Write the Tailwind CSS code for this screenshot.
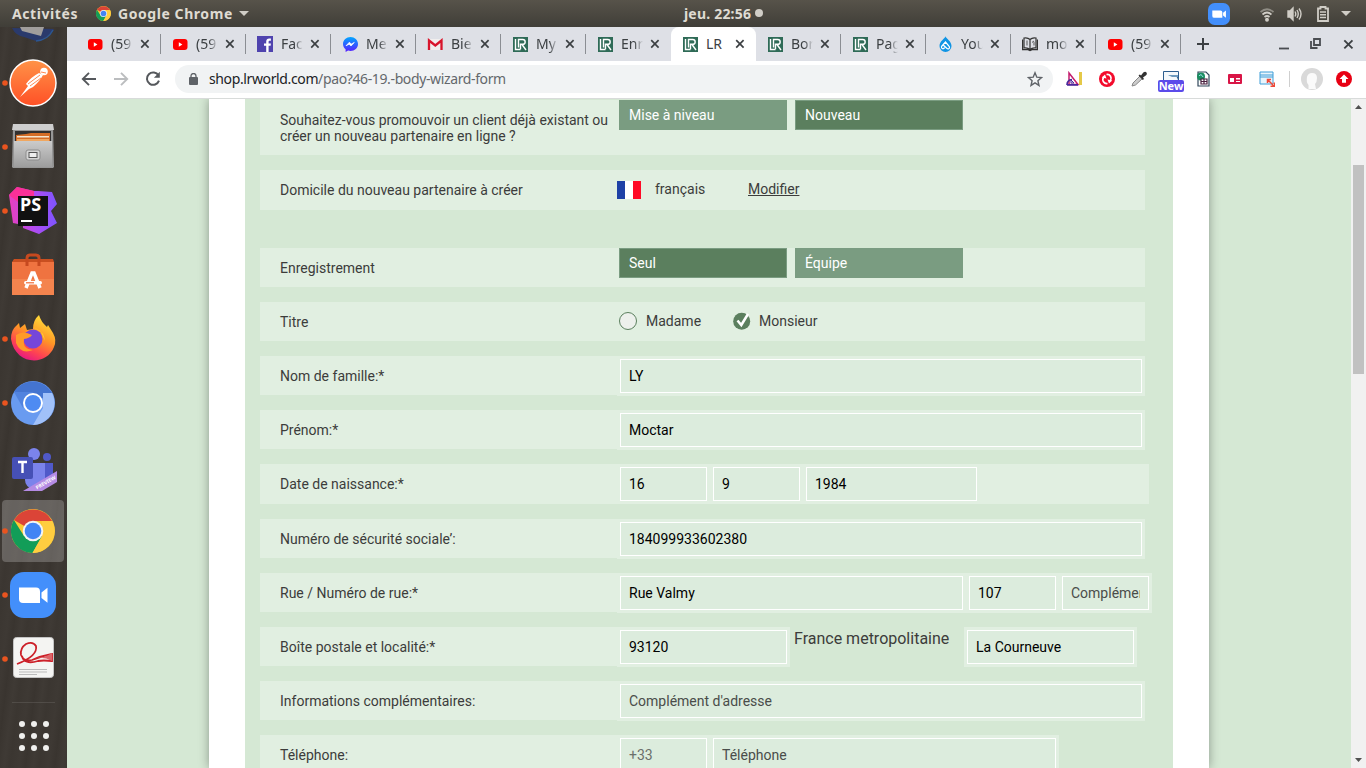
<!DOCTYPE html>
<html lang="fr">
<head>
<meta charset="utf-8">
<title>LR</title>
<script src="https://cdn.jsdelivr.net/npm/@tailwindcss/browser@4"></script>
</head>
<body class="w-[1366px] h-[768px] overflow-hidden flex flex-col font-['Noto_Sans',sans-serif] text-[#3c4043]">
<svg width="0" height="0" class="absolute">
  <defs>
    <symbol id="yt" viewBox="0 0 16 16"><rect x="1" y="3" width="14.500" height="11" rx="3" fill="#f00"/><path d="M6.800 6.300v4.400L10.400 8.500z" fill="#fff"/></symbol>
    <symbol id="fb" viewBox="0 0 16 16"><rect width="16" height="16" fill="#4f43ae"/><path d="M9.200 16V9.800H7V7.400h2.200V5.600c0-2 1.200-3.100 3-3.100.8 0 1.500.1 1.700.1v2.100h-1.200c-.9 0-1.100.5-1.100 1.200v1.500h2.300l-.3 2.400h-2V16z" fill="#fff"/></symbol>
    <symbol id="ms" viewBox="0 0 16 16"><defs><linearGradient id="msg" x1="0" y1="0" x2="0" y2="1"><stop stop-color="#00a6ff"/><stop offset="1" stop-color="#5a1cff"/></linearGradient></defs><path d="M8.500 1C4.400 1 1 4 1 8c0 2.200 1 4 2.600 5.300V16l2.500-1.400c.7.2 1.600.3 2.400.3 4.200 0 7.500-3 7.500-7S12.700 1 8.500 1z" fill="url(#msg)"/><path d="M4 9.800l3.400-3.600 1.900 1.900 3-1.700-3.300 3.600-1.900-1.800z" fill="#fff" stroke="#fff" stroke-width=".7"/></symbol>
    <symbol id="gm" viewBox="0 0 16 16"><path d="M1 3h14v11H1z" fill="#f1efee"/><path d="M2 14V4.500l6.300 5L14.500 4.500V14" fill="none" stroke="#d8152c" stroke-width="2.300"/></symbol>
    <symbol id="lr" viewBox="0 0 16 16"><rect x="1" y="1" width="15" height="15" fill="#2f6b57"/><path d="M3.500 3v10.500h5M6.500 11.500V3.500h4.200c3.300 0 3.300 4.800 0 4.800H8.500v5M10 8.500l4 5.500" fill="none" stroke="#fff" stroke-width="1.400"/></symbol>
    <symbol id="dr" viewBox="0 0 16 16"><path d="M8.500.3C8 2.800 2.500 5 2.500 10a6 6 0 0 0 12 0C14.500 5 9 2.800 8.500.3z" fill="#1094e4"/><path d="M4.500 10.500L8.500 6l3.800 4.500c1 2-1.300 3.300-2.600 1.700L6.500 9.300M7.500 11.500c-1 2.400-3.500 1-3-1" fill="none" stroke="#fff" stroke-width="1.200"/></symbol>
    <symbol id="bk" viewBox="0 0 16 16"><path d="M8 3.500C6 1.600 3.500 1.700 2 2v10c2-.4 4.300 0 6 1.500 1.700-1.500 4-1.900 6-1.500V2c-1.500-.3-4-.4-6 1.500zM8 3.500v10M.5 3.500v10.200H6l2 1 2-1h5.500V3.500" fill="none" stroke="#333" stroke-width="1.200"/><path d="M5 4.500v5M10 6.500q2-2.500 2 0v3" fill="none" stroke="#555"/></symbol>
    <symbol id="x" viewBox="0 0 10 10"><path d="M1.200 1.200l7.400 7.400M8.600 1.200L1.200 8.600" stroke="#3c4043" stroke-width="1.700" fill="none"/></symbol>
    <symbol id="chrome" viewBox="0 0 44 44"><circle cx="22" cy="22" r="22" fill="#fcc934"/><path d="M22 22L2.900 11A22 22 0 0 1 41.100 12H22z" fill="#db4437"/><path d="M2.900 11A22 22 0 0 0 21.500 44L31 27.500 22 22 13 27z" fill="#129d58"/><path d="M41.100 12A22 22 0 0 1 21.500 44L31 27V12z" fill="#ffcd40"/><circle cx="22" cy="22" r="10.300" fill="#f4f4f4"/><circle cx="22" cy="22" r="8.300" fill="#4285f4"/></symbol>
    <symbol id="cam" viewBox="0 0 46 46"><rect width="46" height="46" rx="14" fill="#438ffb"/><path d="M9 15.500h17a4 4 0 0 1 4 4v11.500H13a4 4 0 0 1-4-4zM31.500 20.500l6-4.700v15l-6-4.700z" fill="#fff"/></symbol>
  </defs>
</svg>

<!-- System bar -->
<header class="h-[27px] shrink-0 bg-linear-to-b from-[#57534a] to-[#403e38] flex items-center text-[#dfdbd2] font-bold text-[14px] relative">
  <span class="ml-[12px] w-[84px] whitespace-nowrap" data-fit="63">Activités</span>
  <svg class="w-[15px] h-[15px]"><use href="#chrome"/></svg>
  <span class="ml-[7px] whitespace-nowrap" data-fit="110">Google Chrome</span>
  <svg class="ml-[6px]" width="10" height="5"><path d="M0 0h10L5 5z" fill="#d0cdc6"/></svg>
  <div class="absolute left-[684px] top-0 h-[26px] flex items-center gap-[4px]"><span data-fit="66" class="whitespace-nowrap">jeu. 22:56</span><i class="size-2 rounded-full bg-[#d0cdc6]"></i></div>
  <div class="ml-auto flex items-center h-full">
    <svg class="w-[22px] h-[22px] mr-[29px]"><use href="#cam"/></svg>
    <svg class="mr-[12px]" width="16" height="16" viewBox="0 0 16 16" fill="none" stroke="#d0cdc6" stroke-width="1.700"><path d="M1.500 6Q8 .5 14.500 6" opacity=".5"/><path d="M3.500 8.500Q8 4.500 12.500 8.500M5.500 11Q8 9 10.500 11"/><circle cx="8" cy="13.700" r="1.100" fill="#d0cdc6"/></svg>
    <svg class="mr-[13px]" width="16" height="16" viewBox="0 0 16 16" fill="none" stroke="#d0cdc6" stroke-width="1.400"><path d="M1 5h2l3-3v12l-3-3H1z" fill="#d0cdc6"/><path d="M8 5.500Q9.500 8 8 10.500M10 4Q12.500 8 10 12M12 2.500Q16 8 12 13.500"/></svg>
    <svg class="mr-[11px]" width="14" height="16" viewBox="0 0 14 16" fill="none" stroke="#d0cdc6"><path d="M2 2.500h2.500V1h5v1.500H12V15H2z" stroke-width="1.800"/><path d="M4 6h6M4 8.800h6M4 11.600h6" stroke-width="1.500"/></svg>
    <svg class="mr-[15px]" width="10" height="5"><path d="M0 0h10L5 5z" fill="#d0cdc6"/></svg>
  </div>
</header>

<div class="flex flex-1 min-h-0">
  <!-- Dock -->
  <aside class="w-[67px] shrink-0 bg-[repeating-linear-gradient(97deg,#3a3530_0px,#3f3a35_7px,#3b3631_13px,#3e3934_22px,#39342f_29px)] flex flex-col overflow-hidden">
    <svg class="h-[24px] w-[67px] shrink-0" viewBox="0 0 67 24"><path d="M12 1q4 8 12 9l12 4 2-1q11-2 16-11z" fill="#2a3a6c"/><path d="M20 0l2 4 19 5 3-9z" fill="#a19e9c"/><path d="M36 14q12-1 17-11" stroke="#2c5692" fill="none" stroke-width="1.500"/></svg>
    <div id="dock" class="flex flex-col"></div>
    <div class="mx-3 mt-[11px] h-px bg-white/10"></div>
    <div class="mt-[18px] mx-auto grid grid-cols-3 gap-[6px]">
      <i class="size-[6px] rounded-full bg-[#f0f0ee]"></i><i class="size-[6px] rounded-full bg-[#f0f0ee]"></i><i class="size-[6px] rounded-full bg-[#f0f0ee]"></i>
      <i class="size-[6px] rounded-full bg-[#f0f0ee]"></i><i class="size-[6px] rounded-full bg-[#f0f0ee]"></i><i class="size-[6px] rounded-full bg-[#f0f0ee]"></i>
      <i class="size-[6px] rounded-full bg-[#f0f0ee]"></i><i class="size-[6px] rounded-full bg-[#f0f0ee]"></i><i class="size-[6px] rounded-full bg-[#f0f0ee]"></i>
    </div>
  </aside>

  <main class="flex-1 min-w-0 flex flex-col">
    <!-- Tabs -->
    <div class="h-[34px] shrink-0 bg-[#dee0e6] flex items-center pl-[9px]">
      <div id="tabs" class="flex h-full"></div>
      <svg class="ml-[16px]" width="12" height="12"><path d="M6 0v12M0 6h12" stroke="#3c4043" stroke-width="2"/></svg>
      <svg class="ml-auto mr-[21px]" width="10" height="12"><path d="M0 10.500h10" stroke="#4a4d51" stroke-width="1.800"/></svg>
      <svg class="mr-[22px]" width="11" height="12" fill="none" stroke="#4a4d51"><path d="M4 1h6v6H4zM1 3v7h6.500" stroke-width="1.800"/></svg>
      <svg class="mr-[12px] w-[11px] h-[11px]"><use href="#x"/></svg>
    </div>
    <!-- Toolbar -->
    <div class="h-[38px] shrink-0 bg-white border-b border-[#d8dbda] flex items-center pl-[14px] pb-px">
      <svg class="w-4 h-4" viewBox="0 0 16 16" fill="none" stroke="#55585c" stroke-width="1.900"><path d="M15 8H2M8 1.800L1.800 8 8 14.200"/></svg>
      <svg class="w-4 h-4 ml-[16px]" viewBox="0 0 16 16" fill="none" stroke="#bbbdbf" stroke-width="1.900"><path d="M1 8h13M8 1.800L14.200 8 8 14.200"/></svg>
      <svg class="w-4 h-4 ml-[16px]" viewBox="0 0 16 16" fill="none" stroke="#55585c" stroke-width="2"><path d="M13.500 4.500A6.200 6.200 0 1 0 14 9.700"/><path d="M14.800.8v6H8.900z" fill="#55585c" stroke="none"/></svg>
      <div class="ml-[14px] w-[878px] h-7 rounded-full bg-[#f1f3f4] flex items-center pl-[14px] pr-[10px]">
        <svg width="9" height="12" viewBox="0 0 9 12"><rect y="4" width="9" height="8" rx="1" fill="#5f6368"/><path d="M2 5V3a2.500 2.500 0 0 1 5 0v2" fill="none" stroke="#5f6368" stroke-width="1.300"/></svg>
        <span class="ml-[11px] pb-[2px] text-[14px] whitespace-nowrap text-[#64686c]" data-fit="295"><span class="text-[#202124]">shop.lrworld.com</span>/pao?46-19.-body-wizard-form</span>
        <svg class="ml-auto" width="16" height="16" viewBox="0 0 16 16"><path d="M8 1.800l1.800 4.400 4.700.4-3.600 3.100 1.100 4.700-4-2.500-4 2.500 1.100-4.700L1.500 6.600l4.700-.4z" fill="none" stroke="#5f6368" stroke-width="1.400"/></svg>
      </div>
      <div class="flex items-center ml-[13px]">
        <svg width="17" height="16" viewBox="0 0 17 16"><path d="M3 2l9 11.500H3z" fill="#fff" stroke="#c41d6d" stroke-width="1.500"/><path d="M5 9l3 3H5z" fill="none" stroke="#4a2a9c"/><path d="M1 14q0-5 5-5.500M1 13.800h11" stroke="#4a2a9c" stroke-width="1.700" fill="none"/><path d="M14.500 1v13" stroke="#e5c948" stroke-width="3"/></svg>
        <svg class="ml-[16px]" width="16" height="16" viewBox="0 0 16 16"><circle cx="8" cy="8" r="8" fill="#f30b2c"/><path d="M8.500 12.500C5 13 2.500 9.500 4.700 6M7.500 3.500C11 3 13.500 6.500 11.300 10" stroke="#fff" stroke-width="1.700" fill="none"/><path d="M2.700 6.600L6 3.600l1.500 4zM13.300 9.400L10 12.400l-1.500-4z" fill="#fff"/></svg>
        <svg class="ml-[16px]" width="16" height="16" viewBox="0 0 16 16"><path d="M1 15l1-3L9 5l2.500 2.500L4.500 14z" fill="#ccc" stroke="#888"/><path d="M7.500 4.500l1.300-1L10 4.600 12.300 1.500q2-1.500 3.200 0 .9 1.800-.4 2.700L12 6.500 13 8l-1.300 1z" fill="#333"/></svg>
        <div class="relative ml-[11px] w-[26px] h-[28px]">
          <svg class="absolute left-[5px] top-[6px]" width="16" height="12"><path d="M0 0h16v12H0z" fill="#f4f8fb"/><path d="M.5 9V.5h15V9" fill="none" stroke="#2d5d8e"/><path d="M6 5q7-3 9 4V4z" fill="#2d5d8e"/><path d="M5 4h10v2H9z" fill="#6d99bd"/></svg>
          <span class="absolute left-0 top-[15px] w-[26px] h-[12px] rounded-[2px] bg-[#5b4bea] text-white text-[11px] leading-[12px] font-bold text-center">New</span>
        </div>
        <svg class="ml-[12px]" width="14" height="16" viewBox="0 0 14 16"><path d="M2 1h8l3 3v11H2z" fill="#fff" stroke="#30475a" stroke-width="1.200"/><circle cx="5" cy="5.500" r="4" fill="#1b8d60"/><path d="M3 5q2-3 4 1" stroke="#98ddea" fill="none"/><path d="M5 8h6v5H5zM8 8v5M5 10.500h6" fill="#fff" stroke="#49203f" stroke-width="1.200"/></svg>
        <svg class="ml-[18px]" width="14" height="12" viewBox="0 0 14 12"><rect y="1" width="14" height="10" rx="1" fill="#d91546"/><path d="M2 5h4v4H2zM8 5h4v1.500H8zM8 8h4v1H8z" fill="#fff"/></svg>
        <svg class="ml-[17px]" width="16" height="16" viewBox="0 0 16 16"><path d="M1 1h13v12H1z" fill="#e9f5fc" stroke="#3f9ed8"/><path d="M1 4h13M1 6h13" stroke="#3f9ed8" stroke-width="1.200"/><path d="M9 9l6 6M8.500 12V8.500H12M15.300 11.500v3.800h-3.800" stroke="#ee4938" fill="none" stroke-width="1.500"/></svg>
        <i class="ml-[14px] w-px h-4 bg-[#cfcfcf]"></i>
        <svg class="ml-[11px]" width="22" height="22" viewBox="0 0 22 22"><circle cx="11" cy="11" r="11" fill="#d9d9d9"/><path d="M7.500 21v-4Q5 14 6 9q1-4 5-4 5 0 5 5 0 4-2 6l1 5z" fill="#fafafa"/></svg>
        <svg class="ml-[13px]" width="16" height="16" viewBox="0 0 16 16"><circle cx="8" cy="8" r="8" fill="#e80013"/><path d="M8 3.500L12.500 8H10v3.800H6V8H3.500z" fill="#fff"/></svg>
      </div>
    </div>

    <!-- Page -->
    <div class="flex-1 min-h-0 flex bg-[#d5e8d4] font-[Roboto,sans-serif] text-[14px] leading-4 text-[#3c3c3b]">
      <div class="flex-1 overflow-hidden">
        <div class="ml-[142px] w-[1000px] h-full bg-white px-9 shadow-[0_0_10px_rgba(0,0,0,0.35)]">
          <div id="form" class="bg-[#d5e8d4] h-[669px] pt-px pl-[15px] flex flex-col overflow-hidden">
            <div class="h-[55px] mb-[15px] w-[885px] shrink-0 bg-[#e1efe1] flex pl-5">
              <div class="w-[339px] pt-[12px] whitespace-nowrap">Souhaitez-vous promouvoir un client déjà existant ou<br>créer un nouveau partenaire en ligne ?</div>
              <div class="flex gap-2 text-white leading-[28px]"><div class="w-[168px] h-[30px] pl-[9px] border border-[#7a9c81] bg-[#7a9c81]">Mise à niveau</div><div class="w-[168px] h-[30px] pl-[9px] border border-[#7a9c81] bg-[#5b7f5e]">Nouveau</div></div>
            </div>
            <div class="h-[40px] mb-[38px] w-[885px] shrink-0 bg-[#e1efe1] flex items-center pl-5">
              <div class="w-[337px]">Domicile du nouveau partenaire à créer</div>
              <div class="flex w-6 h-[18px]"><i class="flex-1 bg-[#1e41a6]"></i><i class="flex-1 bg-white"></i><i class="flex-1 bg-[#ff0a26]"></i></div>
              <span class="ml-[14px] w-[93px] pb-[2px]">français</span><span class="underline pb-[2px]">Modifier</span>
            </div>
            <div class="h-[39px] mb-[15px] w-[885px] shrink-0 bg-[#e1efe1] flex pl-5">
              <div class="w-[339px] pt-[12px]">Enregistrement</div>
              <div class="flex gap-2 text-white leading-[28px]"><div class="w-[168px] h-[30px] pl-[9px] border border-[#7a9c81] bg-[#5b7f5e]">Seul</div><div class="w-[168px] h-[30px] pl-[9px] border border-[#7a9c81] bg-[#7a9c81]">Équipe</div></div>
            </div>
            <div class="h-[39px] mb-[15px] w-[885px] shrink-0 bg-[#e1efe1] flex items-center pl-5">
              <div class="w-[339px] pt-px">Titre</div>
              <i class="size-[18px] mb-[2px] rounded-full border border-[#5b7f5e] bg-[#edf0ec]"></i><span class="ml-[9px] w-[87px] pb-px">Madame</span>
              <svg class="mb-[2px]" width="18" height="18" viewBox="0 0 18 18"><circle cx="8.700" cy="9.300" r="8.500" fill="#5b7f5e"/><path d="M4.500 8.500l3.800 4.500L15 2" fill="none" stroke="#fff" stroke-width="2.500"/></svg>
              <span class="ml-[8px] pb-px">Monsieur</span>
            </div>
          </div>
        </div>
      </div>
      <!-- Scrollbar -->
      <div class="w-[15px] bg-[#f1f1f1] flex flex-col items-center">
        <svg class="mt-[6px]" width="7" height="4"><path d="M0 4h7L3.500 0z" fill="#505050"/></svg>
        <div class="mt-[56px] w-[11px] h-[209px] bg-[#c1c1c1]"></div>
        <svg class="mt-auto mb-[6px]" width="7" height="4"><path d="M0 0h7L3.500 4z" fill="#505050"/></svg>
      </div>
    </div>
  </main>
</div>

<script>
const tabs = [['yt','(59'],['yt','(59'],['fb','Fac'],['ms','Me'],['gm','Bie'],['lr','My'],['lr','Enr'],['lr','LR',1],['lr','Bor'],['lr','Pag'],['dr','You'],['bk','mo'],['yt','(59']];
document.getElementById('tabs').innerHTML = tabs.map(([ic,t,on],i) => `
  <div class="w-[85px] h-full flex items-center pl-[11px] relative ${on ? 'bg-white rounded-t-[8px]' : ''}">
    <svg class="w-4 h-4 shrink-0"><use href="#${ic}"/></svg>
    <span class="ml-[8px] w-[22px] overflow-hidden whitespace-nowrap text-[14px] leading-5 ${on ? '' : 'mask-r-from-60% mask-r-to-100%'}">${t}</span>
    <svg class="ml-[7px] w-[10px] h-[10px] shrink-0"><use href="#x"/></svg>
    ${on || i === 6 || i === 7 ? '' : '<i class="absolute right-0 top-[7px] w-px h-5 bg-[#8b8e93]"></i>'}
  </div>`).join('');

/* F: one field (width, text, colour); G: the pale block round a group of fields */
const F = (w,t,p) => `<div class="h-[34px] border border-white bg-[#dcecdd] px-[8px] leading-[32px] shrink-0 ${p || 'text-black'}" style="width:${w}px"><div class="overflow-hidden whitespace-nowrap">${t}</div></div>`;
const G = (w,...f) => `<div class="h-[40px] bg-[#e1efe1] flex gap-[6px] pl-[3px] pt-[3px] shrink-0" style="width:${w}px">${f.join('')}</div>`;
const ph = 'text-[#4a4d4a]', ph2 = 'text-[#6b6f6b]';
const rows = [
  ['Nom de famille:*', G(528,F(522,'LY'))],
  ['Prénom:*', G(528,F(522,'Moctar'))],
  ['Date de naissance:*', G(532,F(87,'16'),F(87,'9'),F(171,'1984')), 1],
  ['Numéro de sécurité sociale’:', G(528,F(522,'184099933602380'))],
  ['Rue / Numéro de rue:*', G(535,F(343,'Rue Valmy'),F(87,'107'),F(87,'Complément',ph))],
  ['Boîte postale et localité:*', G(173,F(167,'93120')) + '<span class="ml-[4px] w-[170px] pt-[4px] text-[16px] whitespace-nowrap">France metropolitaine</span>' + G(173,F(167,'La Courneuve'))],
  ['Informations complémentaires:', G(528,F(522,'Complément d\'adresse',ph))],
  ['Téléphone:', G(442,F(87,'+33',ph2),F(343,'Téléphone',ph))]
];
document.getElementById('form').insertAdjacentHTML('beforeend', rows.map(([l,g,tall]) => `
  <div class="flex shrink-0 ${tall ? 'h-[55px]' : 'h-[54px]'}">
    <div class="w-[357px] pl-5 pt-[12px] bg-[#e1efe1] shrink-0 ${tall ? 'h-[40px]' : 'h-[39px]'}">${l}</div>${g}
  </div>`).join(''));

const icons = [
 `<defs><linearGradient id="pmg" x1="0" y1="0" x2="0" y2="1"><stop stop-color="#ff9348"/><stop offset="1" stop-color="#ff5026"/></linearGradient></defs><circle cx="33" cy="32" r="23" fill="url(#pmg)" stroke="#fff" stroke-width="1.500"/><circle cx="44" cy="20.500" r="3.800" fill="#fff"/><path d="M39 22q-8 4-13 11l2 2-8 11 9-8 4-2q7-6 10-12z" fill="#fff"/><path d="M28 33l12-9M30 35l11-8M41 21l5 1" stroke="#ff7c3f" stroke-width=".9"/>`,
 `<defs><linearGradient id="flg" x1="0" y1="0" x2="0" y2="1"><stop stop-color="#cbcbcb"/><stop offset="1" stop-color="#9d9d9d"/></linearGradient></defs><path d="M13 10h40l1 42-1 1H13l-1-1z" fill="#969696"/><path d="M13 9h40l1 6H12z" fill="#cecece"/><path d="M15 16h36v10H15z" fill="#32302f"/><path d="M16 20l10-1 5-1h19v9H16z" fill="#d56d26"/><path d="M17 21h32v1.500H17z" fill="#f5e5cf"/><path d="M17 24h32v3H17z" fill="#f0a760"/><path d="M14 26h38v26H14z" fill="url(#flg)"/><rect x="26" y="35" width="14" height="10" rx="2" fill="#d4d4d4" stroke="#8c8c8c"/><rect x="29" y="37.500" width="8" height="5" fill="#eee" stroke="#555"/>`,
 `<defs><linearGradient id="psg"><stop stop-color="#e83fbd"/><stop offset=".5" stop-color="#b44bf0"/><stop offset="1" stop-color="#7c55ff"/></linearGradient></defs><path d="M9 16l8-8 17 4h4l14 1 5 12-6 7 6 12-18 11-16-6v-3l-10-2z" fill="url(#psg)"/><path d="M9 16l8-8 17 4v5H18v6z" fill="#fa3098"/><rect x="18" y="17" width="30" height="30" fill="#111"/><text x="20" y="32" class="font-['Noto_Sans',sans-serif] font-bold text-[18px] tracking-normal" fill="#fff">PS</text><path d="M21 42h11" stroke="#fff" stroke-width="2"/>`,
 `<path d="M12 19h42v33H12z" fill="#ef7340"/><path d="M12 19h42l-1-3H14z" fill="#c94f20"/><path d="M12 36h42v16H12z" fill="#f4844e"/><path d="M27 23v-8q0-3 3-3h6q3 0 3 3v8" fill="none" stroke="#c6491f" stroke-width="3"/><path d="M26 45l6-15h2l6 15" fill="none" stroke="#fff" stroke-width="3.500"/><rect x="24" y="38" width="18" height="3.500" rx="1.700" fill="#fff"/><path d="M26 39.800h8" stroke="#ef6a36" stroke-width="1.200"/>`,
 `<defs><linearGradient id="fxg" x1=".8" y1="0" x2=".3" y2="1"><stop stop-color="#ffe83c"/><stop offset=".45" stop-color="#ff9626"/><stop offset=".75" stop-color="#ff4550"/><stop offset="1" stop-color="#e31587"/></linearGradient></defs><path d="M11 32q0-9 5-13l3-3 1 5 5-4 2 6 6-1q0-9 6-14 2 7 8 12l1-2 5 8q4 7 1 14c-8 20-39 18-43-8z" fill="url(#fxg)"/><circle cx="33" cy="32" r="9.500" fill="#7546d9"/><path d="M33 20l8 5 4 9q-1-9-8-12z" fill="#ffcc37"/><path d="M16 28q7-5 16 0-2 3-8 4-2 10 9 11-12 5-17-7z" fill="#ff9a28"/>`,
 `<circle cx="33" cy="32" r="22" fill="#699bf0"/><path d="M33 32L14 21a22 22 0 0 1 38 1z" fill="#4474d0"/><path d="M52 22A22 22 0 0 1 33 54l10-17V22z" fill="#a1c1f9"/><path d="M14 21l9 16 10-16z" fill="#5183df"/><circle cx="33" cy="32" r="10" fill="#fff"/><circle cx="33" cy="32" r="8" fill="#4e8bf2"/>`,
 `<circle cx="34" cy="19" r="6" fill="#7b83eb"/><circle cx="47" cy="22" r="4" fill="#5059c9"/><path d="M40 28h13v15q-3 6-11 6z" fill="#5059c9"/><path d="M26 28h19v19q-3 8-11 8-9-3-9-10z" fill="#7b83eb"/><rect x="12" y="22" width="21" height="22" rx="2" fill="#4650b5"/><path d="M18 27h9M22.500 27v11" stroke="#fff" stroke-width="2.400"/><path d="M23 56L57 36v11L42 56z" fill="#b58be4"/><text transform="translate(37 54.500) rotate(-30)" class="font-['Noto_Sans',sans-serif] font-bold text-[5px]" fill="#fff">PREVIEW</text>`,
 `<rect x="2" y="1" width="62" height="62" rx="4" fill="#fff" opacity=".22"/><use href="#chrome" x="11" y="10" width="44" height="44"/>`,
 `<use href="#cam" x="10" y="9" width="46" height="46"/>`,
 `<rect x="13.500" y="10.500" width="40" height="40" rx="3" fill="#f4f4f2" stroke="#c4c4c4"/><path d="M17 37q21-8 19-18-3-5-10-2-6 4-5 11 3 7 11 5 9-4 20-6v7q-9-1-14 0-14 4-16-5" fill="none" stroke="#cc2029" stroke-width="1.800"/><path d="M37 31q7 0 15-5v8q-7-4-15-3z" fill="#dc656a"/><path d="M19 42.500h28M19 45h28M19 47.500h18" stroke="#bbb"/>`
];
const idle = [3,6];
document.getElementById('dock').innerHTML = icons.map((s,i) => `<svg class="w-[67px] h-[64px] shrink-0" viewBox="0 0 67 64">${s}${idle.includes(i) ? '' : '<circle cx="5" cy="32" r="2.800" fill="#e9541f"/>'}</svg>`).join('');

/* spread interface labels to their nominal widths */
document.querySelectorAll('[data-fit]').forEach(e => {
  const r = document.createRange(); r.selectNodeContents(e);
  e.style.letterSpacing = '0px';
  e.style.letterSpacing = (e.dataset.fit - r.getBoundingClientRect().width) / e.textContent.length + 'px';
});
</script>
</body>
</html>
